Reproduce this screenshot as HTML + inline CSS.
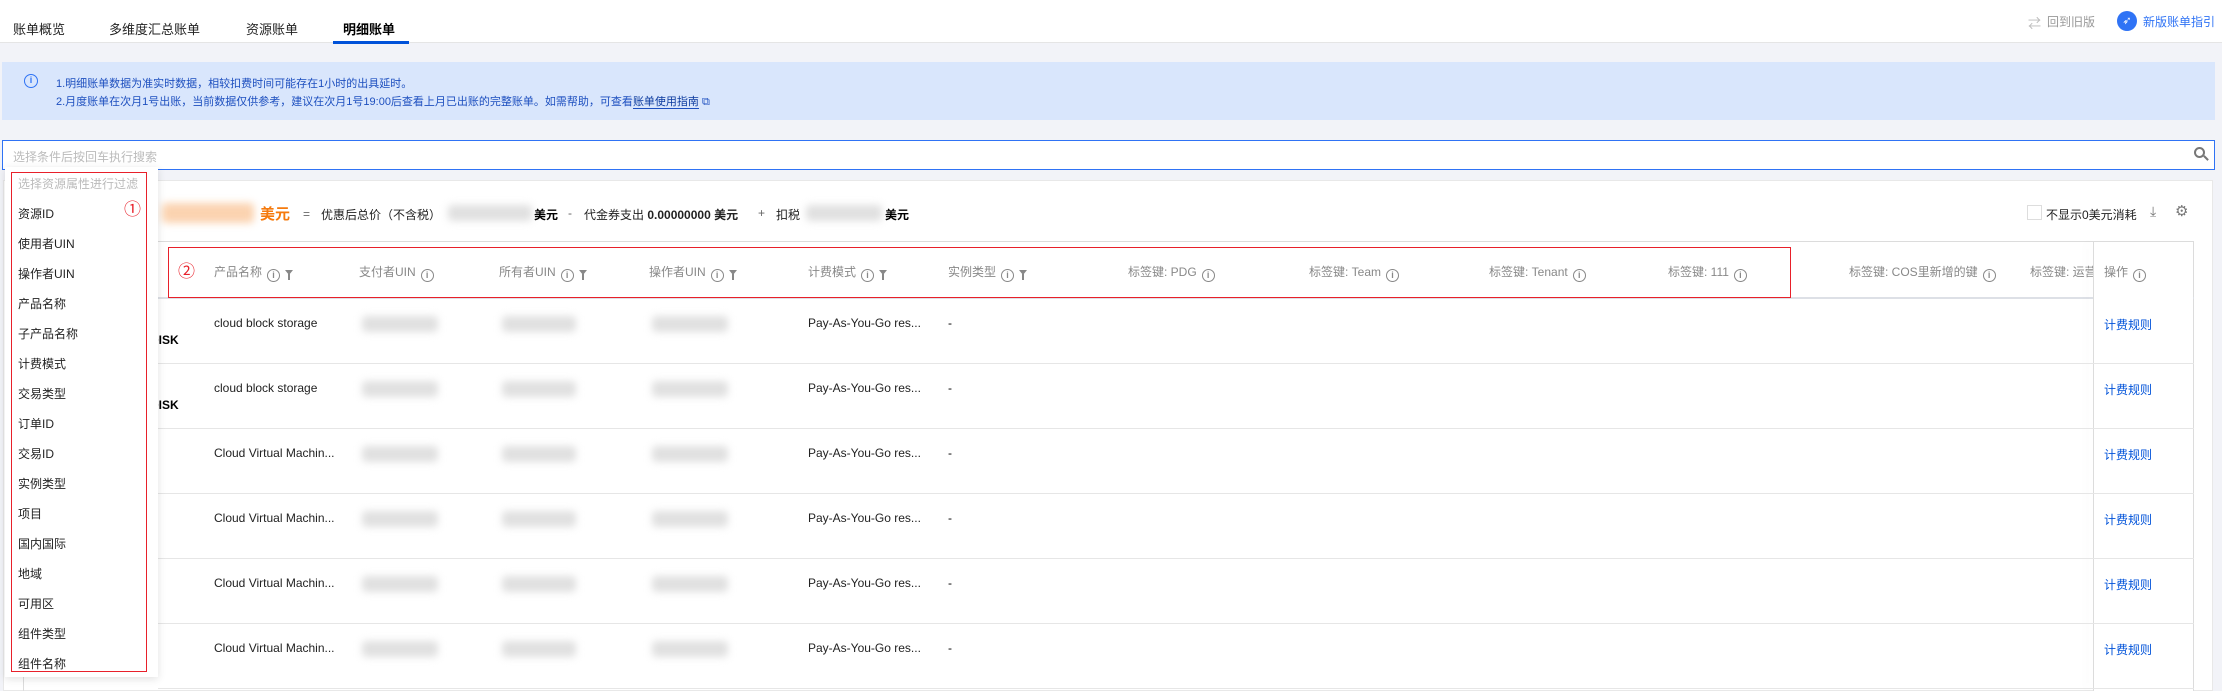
<!DOCTYPE html>
<html><head><meta charset="utf-8"><style>
*{margin:0;padding:0;box-sizing:border-box}
body{width:2222px;height:691px;overflow:hidden;background:#f2f3f8;font-family:"Liberation Sans","Noto Sans CJK SC",sans-serif;font-size:12px;color:#000;position:relative}
.a{position:absolute;white-space:nowrap}
.blur{position:absolute;background:#e0e0e0;filter:blur(4px);border-radius:4px}
.hd{color:#888;font-size:12px}
.i{display:inline-block;width:13px;height:13px;border:1.3px solid #888;border-radius:50%;font-size:9px;line-height:10px;text-align:center;color:#888;vertical-align:-2px;margin-left:5px;font-weight:bold}
.f{display:inline-block;width:0;height:0;border-left:4px solid transparent;border-right:4px solid transparent;border-top:5px solid #888;vertical-align:1px;margin-left:5px;position:relative}
.f:after{content:"";position:absolute;left:-1px;top:-1px;width:2px;height:6px;background:#888}
.it{position:absolute;left:18px;font-size:12px;color:#222}
.row{position:absolute;left:158px;width:2036px;height:1px;background:#e6e6e6}
</style></head><body>
<div class="a" style="left:0;top:0;width:2222px;height:43px;background:#fff;border-bottom:1px solid #e5e5e5"></div>
<div class="a" style="left:13px;top:19px;font-size:13px;color:#222">账单概览</div>
<div class="a" style="left:109px;top:19px;font-size:13px;color:#222">多维度汇总账单</div>
<div class="a" style="left:246px;top:19px;font-size:13px;color:#222">资源账单</div>
<div class="a" style="left:343px;top:19px;font-size:13px;color:#000;font-weight:bold">明细账单</div>
<div class="a" style="left:333px;top:41px;width:76px;height:3px;background:#0052d9"></div>
<div class="a" style="left:2028px;top:13px;font-size:13px;color:#bbb">⇄</div>
<div class="a" style="left:2047px;top:13px;font-size:12px;color:#999">回到旧版</div>
<div class="a" style="left:2117px;top:11px;width:20px;height:20px;border-radius:50%;background:#2f73f5;color:#fff;font-size:11px;text-align:center;line-height:20px">➶</div>
<div class="a" style="left:2143px;top:13px;font-size:12px;color:#2f73f5">新版账单指引</div>

<div class="a" style="left:2px;top:62px;width:2213px;height:58px;background:#d9e6fc"></div>
<div class="a" style="left:24px;top:74px;width:14px;height:14px;border:1.5px solid #2f73f5;border-radius:50%;color:#2f73f5;font-size:9px;text-align:center;line-height:11px;font-weight:bold">i</div>
<div class="a" style="left:56px;top:75px;color:#1d4fbf;font-size:11px">1.明细账单数据为准实时数据，相较扣费时间可能存在1小时的出具延时。</div>
<div class="a" style="left:56px;top:93px;color:#1d4fbf;font-size:11px">2.月度账单在次月1号出账，当前数据仅供参考，建议在次月1号19:00后查看上月已出账的完整账单。如需帮助，可查看<span style="border-bottom:1px solid #1d4fbf;color:#0b3a9e">账单使用指南</span> ⧉</div>

<div class="a" style="left:2px;top:140px;width:2213px;height:30px;background:#fff;border:1px solid #2f73f5"></div>
<div class="a" style="left:13px;top:148px;color:#bbb;font-size:12px">选择条件后按回车执行搜索</div>
<div class="a" style="left:2194px;top:147px;width:11px;height:11px;border:2px solid #777;border-radius:50%"></div>
<div class="a" style="left:2203px;top:157px;width:6px;height:2px;background:#777;transform:rotate(45deg)"></div>

<div class="a" style="left:3px;top:180px;width:2210px;height:511px;background:#fff;border:1px solid #e8e8e8"></div>
<div class="blur" style="left:162px;top:203px;width:92px;height:20px;background:#fbd3b0"></div>
<div class="a" style="left:260px;top:203px;color:#f57a0d;font-size:15px;font-weight:bold">美元</div>
<div class="a" style="left:303px;top:207px;color:#666">=</div>
<div class="a" style="left:321px;top:206px;color:#222">优惠后总价（不含税）</div>
<div class="blur" style="left:448px;top:205px;width:84px;height:16px"></div>
<div class="a" style="left:534px;top:206px;font-weight:bold">美元</div>
<div class="a" style="left:568px;top:206px;color:#666">-</div>
<div class="a" style="left:584px;top:206px;color:#222">代金券支出 <b>0.00000000 美元</b></div>
<div class="a" style="left:758px;top:206px;color:#666">+</div>
<div class="a" style="left:776px;top:206px;color:#222">扣税</div>
<div class="blur" style="left:806px;top:205px;width:76px;height:16px"></div>
<div class="a" style="left:885px;top:206px;font-weight:bold">美元</div>
<div class="a" style="left:2027px;top:205px;width:15px;height:15px;border:1px solid #ddd"></div>
<div class="a" style="left:2046px;top:206px;color:#222">不显示0美元消耗</div>
<div class="a" style="left:2150px;top:203px;color:#777;font-size:14px">⤓</div>
<div class="a" style="left:2175px;top:202px;color:#777;font-size:15px">⚙</div>

<div class="a" style="left:23px;top:241px;width:2171px;height:450px;border:1px solid #dcdcdc;border-bottom:none"></div>
<div class="a" style="left:23px;top:297px;width:2171px;height:2px;background:#dde0e6"></div>
<div class="a" style="left:2093px;top:241px;width:1px;height:450px;background:#dcdcdc;box-shadow:-6px 0 8px rgba(0,0,0,.08)"></div>
<div class="a" style="left:2094px;top:242px;width:99px;height:449px;background:#fff"></div>

<div class="a hd" style="left:214px;top:263px">产品名称<span class="i">i</span><span class="f"></span></div>
<div class="a hd" style="left:359px;top:263px">支付者UIN<span class="i">i</span></div>
<div class="a hd" style="left:499px;top:263px">所有者UIN<span class="i">i</span><span class="f"></span></div>
<div class="a hd" style="left:649px;top:263px">操作者UIN<span class="i">i</span><span class="f"></span></div>
<div class="a hd" style="left:808px;top:263px">计费模式<span class="i">i</span><span class="f"></span></div>
<div class="a hd" style="left:948px;top:263px">实例类型<span class="i">i</span><span class="f"></span></div>
<div class="a hd" style="left:1128px;top:263px">标签键: PDG<span class="i">i</span></div>
<div class="a hd" style="left:1309px;top:263px">标签键: Team<span class="i">i</span></div>
<div class="a hd" style="left:1489px;top:263px">标签键: Tenant<span class="i">i</span></div>
<div class="a hd" style="left:1668px;top:263px">标签键: 111<span class="i">i</span></div>
<div class="a hd" style="left:1849px;top:263px">标签键: COS里新增的键<span class="i">i</span></div>
<div class="a hd" style="left:2030px;top:263px;width:63px;overflow:hidden">标签键: 运营</div>
<div class="a hd" style="left:2104px;top:263px">操作<span class="i">i</span></div>
<div class="a" style="left:168px;top:247px;width:1623px;height:51px;border:1.5px solid #e8202a"></div>
<div class="a" style="left:178px;top:257px;color:#e8202a;font-size:17px">②</div>

<div class="row" style="top:363px"></div><div class="row" style="top:428px"></div><div class="row" style="top:493px"></div><div class="row" style="top:558px"></div><div class="row" style="top:623px"></div><div class="row" style="top:688px"></div>

<div class="a" style="left:150px;top:333px;font-weight:bold;font-size:12px">DISK</div>
<div class="a" style="left:150px;top:398px;font-weight:bold;font-size:12px">DISK</div>

<div class="a" style="left:214px;top:316px;color:#222">cloud block storage</div>
<div class="a" style="left:214px;top:381px;color:#222">cloud block storage</div>
<div class="a" style="left:214px;top:446px;color:#222">Cloud Virtual Machin...</div>
<div class="a" style="left:214px;top:511px;color:#222">Cloud Virtual Machin...</div>
<div class="a" style="left:214px;top:576px;color:#222">Cloud Virtual Machin...</div>
<div class="a" style="left:214px;top:641px;color:#222">Cloud Virtual Machin...</div>

<div class="blur" style="left:362px;top:316px;width:76px;height:16px"></div><div class="blur" style="left:502px;top:316px;width:74px;height:16px"></div><div class="blur" style="left:652px;top:316px;width:76px;height:16px"></div>
<div class="blur" style="left:362px;top:381px;width:76px;height:16px"></div><div class="blur" style="left:502px;top:381px;width:74px;height:16px"></div><div class="blur" style="left:652px;top:381px;width:76px;height:16px"></div>
<div class="blur" style="left:362px;top:446px;width:76px;height:16px"></div><div class="blur" style="left:502px;top:446px;width:74px;height:16px"></div><div class="blur" style="left:652px;top:446px;width:76px;height:16px"></div>
<div class="blur" style="left:362px;top:511px;width:76px;height:16px"></div><div class="blur" style="left:502px;top:511px;width:74px;height:16px"></div><div class="blur" style="left:652px;top:511px;width:76px;height:16px"></div>
<div class="blur" style="left:362px;top:576px;width:76px;height:16px"></div><div class="blur" style="left:502px;top:576px;width:74px;height:16px"></div><div class="blur" style="left:652px;top:576px;width:76px;height:16px"></div>
<div class="blur" style="left:362px;top:641px;width:76px;height:16px"></div><div class="blur" style="left:502px;top:641px;width:74px;height:16px"></div><div class="blur" style="left:652px;top:641px;width:76px;height:16px"></div>

<div class="a" style="left:808px;top:316px;color:#222">Pay-As-You-Go res...</div><div class="a" style="left:948px;top:316px">-</div><div class="a" style="left:2104px;top:316px;color:#0052d9">计费规则</div>
<div class="a" style="left:808px;top:381px;color:#222">Pay-As-You-Go res...</div><div class="a" style="left:948px;top:381px">-</div><div class="a" style="left:2104px;top:381px;color:#0052d9">计费规则</div>
<div class="a" style="left:808px;top:446px;color:#222">Pay-As-You-Go res...</div><div class="a" style="left:948px;top:446px">-</div><div class="a" style="left:2104px;top:446px;color:#0052d9">计费规则</div>
<div class="a" style="left:808px;top:511px;color:#222">Pay-As-You-Go res...</div><div class="a" style="left:948px;top:511px">-</div><div class="a" style="left:2104px;top:511px;color:#0052d9">计费规则</div>
<div class="a" style="left:808px;top:576px;color:#222">Pay-As-You-Go res...</div><div class="a" style="left:948px;top:576px">-</div><div class="a" style="left:2104px;top:576px;color:#0052d9">计费规则</div>
<div class="a" style="left:808px;top:641px;color:#222">Pay-As-You-Go res...</div><div class="a" style="left:948px;top:641px">-</div><div class="a" style="left:2104px;top:641px;color:#0052d9">计费规则</div>

<div class="a" style="left:5px;top:167px;width:153px;height:510px;background:#fff;box-shadow:0 2px 8px rgba(0,0,0,.12)"></div>
<div class="a" style="left:11px;top:172px;width:136px;height:500px;border:1.5px solid #e8202a"></div>
<div class="it" style="top:175px;color:#bbb">选择资源属性进行过滤</div>
<div class="a" style="left:124px;top:195px;color:#e8202a;font-size:17px">①</div>
<div class="it" style="top:205px">资源ID</div>
<div class="it" style="top:235px">使用者UIN</div>
<div class="it" style="top:265px">操作者UIN</div>
<div class="it" style="top:295px">产品名称</div>
<div class="it" style="top:325px">子产品名称</div>
<div class="it" style="top:355px">计费模式</div>
<div class="it" style="top:385px">交易类型</div>
<div class="it" style="top:415px">订单ID</div>
<div class="it" style="top:445px">交易ID</div>
<div class="it" style="top:475px">实例类型</div>
<div class="it" style="top:505px">项目</div>
<div class="it" style="top:535px">国内国际</div>
<div class="it" style="top:565px">地域</div>
<div class="it" style="top:595px">可用区</div>
<div class="it" style="top:625px">组件类型</div>
<div class="it" style="top:655px">组件名称</div>
</body></html>
